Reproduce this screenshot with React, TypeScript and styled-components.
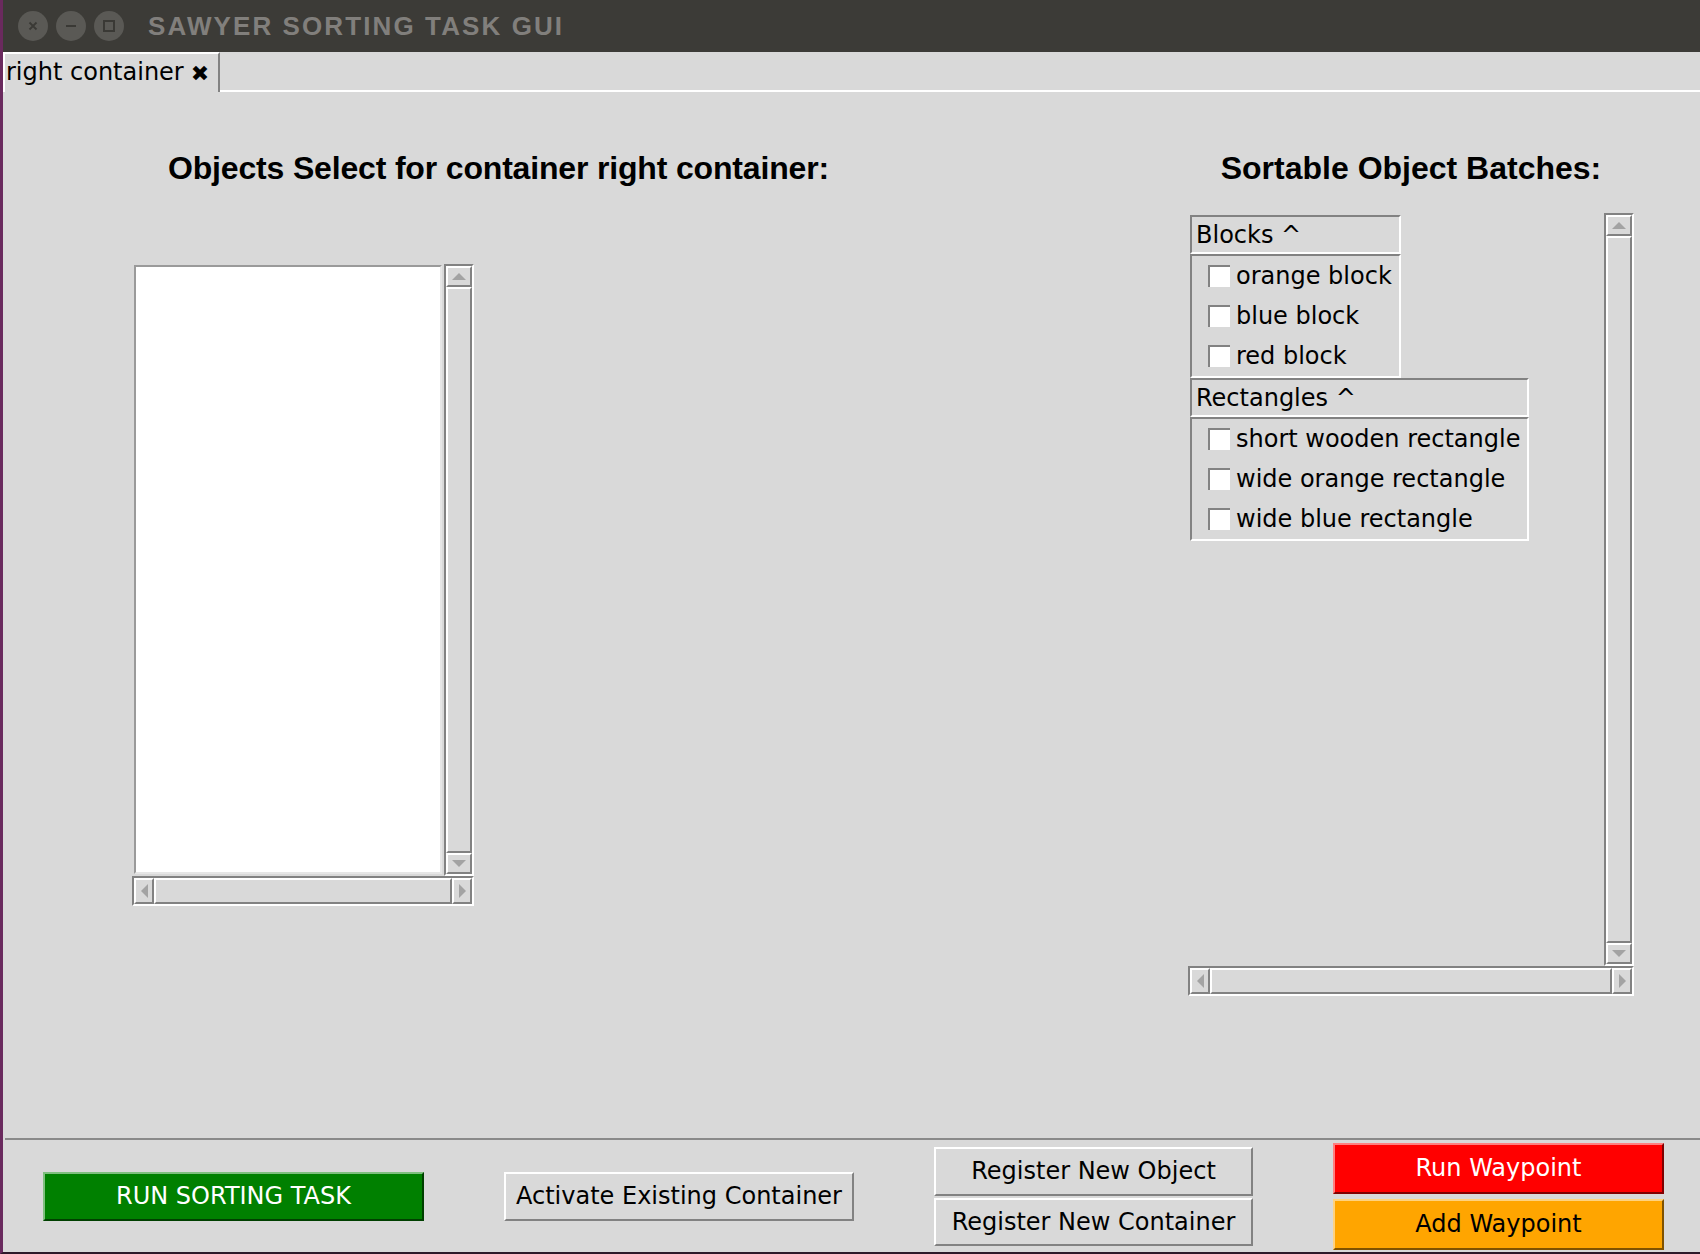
import React from "react";
import styled, { createGlobalStyle, css } from "styled-components";

const GlobalStyle = createGlobalStyle`
  html, body { margin: 0; padding: 0; background: #d9d9d9; }
  body { font-family: "DejaVu Sans", "Noto Sans", sans-serif; font-size: 24px; color: #000; }
  * { box-sizing: border-box; }
`;

const DARK = "#828282";

const Window = styled.div`
  width: 100%;
  height: 1254px;
  display: flex;
  flex-direction: column;
  border-left: 3px solid #6a2a5e;
  border-bottom: 2px solid #2e1a2a;
  overflow: hidden;
  background: #d9d9d9;
`;

const TitleBar = styled.div`
  height: 52px;
  flex-shrink: 0;
  background: #3c3b37;
  display: flex;
  align-items: center;
  padding-left: 15px;
  gap: 8px;
`;

const WinCircle = styled.div`
  width: 30px;
  height: 30px;
  border-radius: 50%;
  background: #5a5955;
  display: flex;
  align-items: center;
  justify-content: center;
`;

const TitleText = styled.div`
  margin-left: 16px;
  font-family: "Liberation Sans", Arial, sans-serif;
  font-weight: bold;
  font-size: 26px;
  letter-spacing: 2.1px;
  color: #817f7c;
`;

const TabBar = styled.div`
  height: 40px;
  flex-shrink: 0;
  display: flex;
`;

const Tab = styled.div`
  width: 217px;
  border-top: 2px solid #fff;
  border-left: 2px solid #fff;
  border-right: 2px solid ${DARK};
  display: flex;
  align-items: center;
  padding: 0 0 2px 1px;
  gap: 7px;
  white-space: nowrap;
`;

const TabClose = styled.span`
  font-size: 22px;
  line-height: 1;
  margin-top: 3px;
`;

const TabFill = styled.div`
  flex: 1;
  border-bottom: 2px solid #fff;
`;

const Main = styled.div`
  flex: 1;
  display: flex;
  padding: 58px 66px 0 129px;
`;

const Column = styled.div<{ $width?: number }>`
  display: flex;
  flex-direction: column;
  ${(p) =>
    p.$width &&
    css`
      width: ${p.$width}px;
      margin-left: auto;
    `}
`;

const Heading = styled.h1<{ $indent?: number; $center?: boolean; $tight?: boolean }>`
  margin: 0 0 0 ${(p) => p.$indent ?? 0}px;
  font-family: "Liberation Sans", Arial, sans-serif;
  font-weight: bold;
  font-size: 32px;
  line-height: 36px;
  white-space: nowrap;
  letter-spacing: ${(p) => (p.$tight ? "-0.17px" : "0")};
  text-align: ${(p) => (p.$center ? "center" : "left")};
`;

const ScrollPanel = styled.div<{ $top: number; $cols: string; $rows: string }>`
  margin-top: ${(p) => p.$top}px;
  display: grid;
  grid-template-columns: ${(p) => p.$cols};
  grid-template-rows: ${(p) => p.$rows};
`;

const ListBox = styled.div`
  margin: 1px 2px 2px 2px;
  background: #fff;
  border: 2px solid;
  border-color: #9a9a9a #e6e6e6 #e6e6e6 #9a9a9a;
`;

const Trough = styled.div<{ $horizontal?: boolean }>`
  display: flex;
  flex-direction: ${(p) => (p.$horizontal ? "row" : "column")};
  border: 2px solid;
  border-color: ${DARK} #fff #fff ${DARK};
  background: #d9d9d9;
  ${(p) => p.$horizontal && css`grid-column: 1 / -1;`}
`;

const raised = css`
  border: 2px solid;
  border-color: #fff ${DARK} ${DARK} #fff;
  background: #d9d9d9;
`;

const ArrowBtn = styled.div<{ $horizontal?: boolean }>`
  ${raised};
  flex: 0 0 auto;
  display: flex;
  align-items: center;
  justify-content: center;
  ${(p) => (p.$horizontal ? css`width: 20px;` : css`height: 21px;`)}
`;

const Slider = styled.div`
  ${raised};
  flex: 1;
`;

type Dir = "up" | "down" | "left" | "right";

const Arrow = styled.span<{ $dir: Dir }>`
  width: 0;
  height: 0;
  ${(p) =>
    p.$dir === "up"
      ? css`border-left: 7px solid transparent; border-right: 7px solid transparent; border-bottom: 7px solid #a3a3a3;`
      : p.$dir === "down"
      ? css`border-left: 7px solid transparent; border-right: 7px solid transparent; border-top: 7px solid #a3a3a3;`
      : p.$dir === "left"
      ? css`border-top: 7px solid transparent; border-bottom: 7px solid transparent; border-right: 7px solid #a3a3a3;`
      : css`border-top: 7px solid transparent; border-bottom: 7px solid transparent; border-left: 7px solid #a3a3a3;`}
`;

const ScrollBar: React.FC<{ horizontal?: boolean }> = ({ horizontal }) => (
  <Trough $horizontal={horizontal}>
    <ArrowBtn $horizontal={horizontal}>
      <Arrow $dir={horizontal ? "left" : "up"} />
    </ArrowBtn>
    <Slider />
    <ArrowBtn $horizontal={horizontal}>
      <Arrow $dir={horizontal ? "right" : "down"} />
    </ArrowBtn>
  </Trough>
);

const Canvas = styled.div`
  padding: 2px;
  display: flex;
  flex-direction: column;
  align-items: flex-start;
`;

const Section = styled.div`
  display: flex;
  flex-direction: column;
`;

const sunken = css`
  border: 2px solid;
  border-color: ${DARK} #fff #fff ${DARK};
`;

const SectionHeader = styled.div`
  ${sunken};
  height: 39px;
  padding: 0 8px 0 4px;
  display: flex;
  align-items: center;
  white-space: nowrap;
`;

const Items = styled.div`
  ${sunken};
  padding: 0 7px 0 16px;
  display: flex;
  flex-direction: column;
`;

const ItemRow = styled.label`
  height: 40px;
  display: flex;
  align-items: center;
  gap: 6px;
  white-space: nowrap;
`;

const CheckBox = styled.span`
  width: 22px;
  height: 22px;
  flex: 0 0 auto;
  background: #fff;
  border-top: 2px solid ${DARK};
  border-left: 2px solid ${DARK};
`;

const Separator = styled.div`
  height: 2px;
  margin-left: 2px;
  background: #8a8a8a;
  flex-shrink: 0;
`;

const Toolbar = styled.div`
  height: 112px;
  flex-shrink: 0;
  display: flex;
  align-items: center;
  padding-left: 40px;
  gap: 80px;
`;

const Stack = styled.div<{ $gap: number }>`
  display: flex;
  flex-direction: column;
  gap: ${(p) => p.$gap}px;
`;

type Variant = "green" | "plain" | "red" | "orange";

const palette: Record<Variant, { bg: string; light: string; dark: string; fg: string }> = {
  green: { bg: "#008000", light: "#7fbf7f", dark: "#004000", fg: "#fff" },
  plain: { bg: "#d9d9d9", light: "#ffffff", dark: "#828282", fg: "#000" },
  red: { bg: "#ff0000", light: "#ff7f7f", dark: "#800000", fg: "#fff" },
  orange: { bg: "#ffa500", light: "#ffd27f", dark: "#805200", fg: "#000" },
};

const TkButton = styled.button<{ $variant: Variant; $w: number; $h: number }>`
  width: ${(p) => p.$w}px;
  height: ${(p) => p.$h}px;
  padding: 0;
  margin: 0;
  font-family: "DejaVu Sans", sans-serif;
  font-size: 24px;
  white-space: nowrap;
  color: ${(p) => palette[p.$variant].fg};
  background: ${(p) => palette[p.$variant].bg};
  border: 2px solid;
  border-color: ${(p) => palette[p.$variant].light} ${(p) => palette[p.$variant].dark}
    ${(p) => palette[p.$variant].dark} ${(p) => palette[p.$variant].light};
  display: flex;
  align-items: center;
  justify-content: center;
`;

const CloseIcon = () => (
  <svg width="14" height="14" viewBox="0 0 14 14">
    <path d="M3.5 3.5 L10.5 10.5 M10.5 3.5 L3.5 10.5" stroke="#3a3935" strokeWidth="1.8" />
  </svg>
);
const MinIcon = () => (
  <svg width="14" height="14" viewBox="0 0 14 14">
    <path d="M2 7 H12" stroke="#3a3935" strokeWidth="2" />
  </svg>
);
const MaxIcon = () => (
  <svg width="14" height="14" viewBox="0 0 14 14">
    <rect x="2" y="2" width="10" height="10" fill="none" stroke="#3a3935" strokeWidth="2" />
  </svg>
);

const batches = [
  { name: "Blocks", items: ["orange block", "blue block", "red block"] },
  { name: "Rectangles", items: ["short wooden rectangle", "wide orange rectangle", "wide blue rectangle"] },
];

export default function App() {
  return (
    <>
      <GlobalStyle />
      <Window>
        <TitleBar>
          <WinCircle>
            <CloseIcon />
          </WinCircle>
          <WinCircle>
            <MinIcon />
          </WinCircle>
          <WinCircle>
            <MaxIcon />
          </WinCircle>
          <TitleText>SAWYER SORTING TASK GUI</TitleText>
        </TitleBar>
        <TabBar>
          <Tab>
            right container<TabClose>✖</TabClose>
          </Tab>
          <TabFill />
        </TabBar>
        <Main>
          <Column>
            <Heading $indent={36} $tight>
              Objects Select for container right container:
            </Heading>
            <ScrollPanel $top={78} $cols="312px 30px" $rows="612px 30px">
              <ListBox />
              <ScrollBar />
              <ScrollBar horizontal />
            </ScrollPanel>
          </Column>
          <Column $width={446}>
            <Heading $center>Sortable Object Batches:</Heading>
            <ScrollPanel $top={27} $cols="416px 30px" $rows="753px 30px">
              <Canvas>
                {batches.map((b) => (
                  <Section key={b.name}>
                    <SectionHeader>{b.name} ^</SectionHeader>
                    <Items>
                      {b.items.map((it) => (
                        <ItemRow key={it}>
                          <CheckBox />
                          {it}
                        </ItemRow>
                      ))}
                    </Items>
                  </Section>
                ))}
              </Canvas>
              <ScrollBar />
              <ScrollBar horizontal />
            </ScrollPanel>
          </Column>
        </Main>
        <Separator />
        <Toolbar>
          <TkButton $variant="green" $w={381} $h={49}>RUN SORTING TASK</TkButton>
          <TkButton $variant="plain" $w={350} $h={49}>Activate Existing Container</TkButton>
          <Stack $gap={2}>
            <TkButton $variant="plain" $w={319} $h={49}>Register New Object</TkButton>
            <TkButton $variant="plain" $w={319} $h={48}>Register New Container</TkButton>
          </Stack>
          <Stack $gap={5}>
            <TkButton $variant="red" $w={331} $h={51}>Run Waypoint</TkButton>
            <TkButton $variant="orange" $w={331} $h={51}>Add Waypoint</TkButton>
          </Stack>
        </Toolbar>
      </Window>
    </>
  );
}
